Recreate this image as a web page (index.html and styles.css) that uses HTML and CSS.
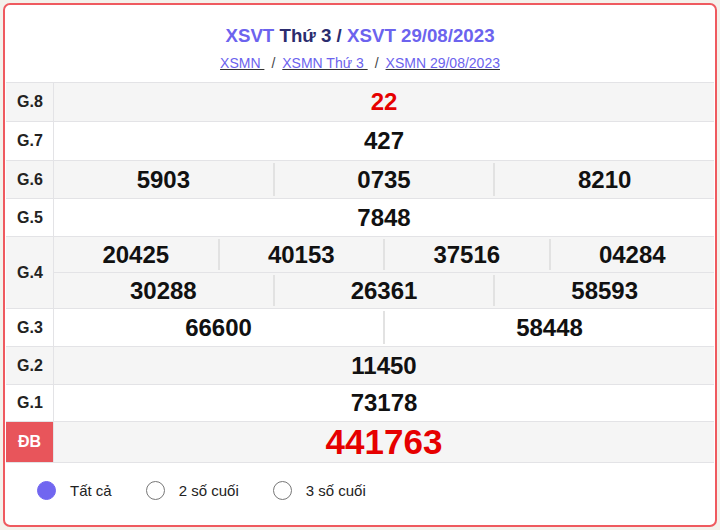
FILE: index.html
```html
<!DOCTYPE html>
<html lang="vi">
<head>
<meta charset="utf-8">
<title>XSVT 29/08/2023</title>
<link rel="stylesheet" href="styles.css">
</head>
<body>
<div class="card">
  <div class="head">
    <h1 class="title"><a href="#">XSVT</a> Thứ 3 / <a href="#">XSVT 29/08/2023</a></h1>
    <div class="crumbs"><a href="#">XSMN </a><span class="sep">/</span><a href="#">XSMN Thứ 3 </a><span class="sep">/</span><a href="#">XSMN 29/08/2023</a></div>
  </div>
  <div class="table">
    <div class="row odd">
      <div class="label">G.8</div>
      <div class="vals"><div class="line h38"><div class="num red">22</div></div></div>
    </div>
    <div class="row">
      <div class="label">G.7</div>
      <div class="vals"><div class="line h38"><div class="num">427</div></div></div>
    </div>
    <div class="row odd">
      <div class="label">G.6</div>
      <div class="vals"><div class="line h37"><div class="num">5903</div><div class="num">0735</div><div class="num">8210</div></div></div>
    </div>
    <div class="row">
      <div class="label">G.5</div>
      <div class="vals"><div class="line h37"><div class="num">7848</div></div></div>
    </div>
    <div class="row odd">
      <div class="label">G.4</div>
      <div class="vals">
        <div class="line h35"><div class="num">20425</div><div class="num">40153</div><div class="num">37516</div><div class="num">04284</div></div>
        <div class="line h35 sub"><div class="num">30288</div><div class="num">26361</div><div class="num">58593</div></div>
      </div>
    </div>
    <div class="row">
      <div class="label">G.3</div>
      <div class="vals"><div class="line h37"><div class="num">66600</div><div class="num">58448</div></div></div>
    </div>
    <div class="row odd">
      <div class="label">G.2</div>
      <div class="vals"><div class="line h37"><div class="num">11450</div></div></div>
    </div>
    <div class="row">
      <div class="label">G.1</div>
      <div class="vals"><div class="line h36"><div class="num">73178</div></div></div>
    </div>
    <div class="row odd">
      <div class="label db">ĐB</div>
      <div class="vals"><div class="line h40"><div class="num red big">441763</div></div></div>
    </div>
  </div>
  <div class="radios">
    <label class="radio"><span class="dot on"></span>Tất cả</label>
    <label class="radio"><span class="dot"></span>2 số cuối</label>
    <label class="radio"><span class="dot"></span>3 số cuối</label>
  </div>
</div>
</body>
</html>
```
FILE: styles.css
```css
html, body { margin: 0; padding: 0; }
body {
  background: #f4f1eb;
  font-family: "Liberation Sans", Arial, sans-serif;
  color: #111;
}
.card {
  margin: 3px;
  height: 524px;
  box-sizing: border-box;
  border: 2px solid #ef5a5f;
  border-radius: 7px;
  background: #fff;
  overflow: hidden;
}
.head {
  padding-top: 20px;
  height: 77px;
  box-sizing: border-box;
  text-align: center;
}
.title {
  margin: 0;
  font-size: 18.7px;
  line-height: 22px;
  font-weight: bold;
  color: #2b2c6e;
}
.title a { color: #6c63ee; text-decoration: none; }
.crumbs {
  margin-top: 8px;
  font-size: 14px;
  line-height: 17px;
  color: #444;
}
.crumbs a {
  color: #6c63ee;
  text-decoration: underline;
  text-decoration-color: #333;
}
.sep { margin: 0 7px; }
.table {
  margin: 0 1px;
  border-bottom: 1px solid #e3e3e6;
}
.row {
  display: flex;
  border-top: 1px solid #e3e3e6;
  background: #fff;
}
.row.odd { background: #f5f5f5; }
.label {
  width: 48px;
  flex: none;
  box-sizing: border-box;
  padding-left: 11px;
  border-right: 1px solid #e3e3e6;
  display: flex;
  align-items: center;
  font-size: 16px;
  font-weight: bold;
  color: #222;
  background: #f5f5f5;
}
.row:not(.odd) .label { background: #fff; }
.label.db {
  background: #e8555b;
  color: #fff;
  padding-left: 12px;
}
.vals {
  flex: 1;
  display: flex;
  flex-direction: column;
}
.line { display: flex; }
.h35 { height: 35px; }
.h36 { height: 36px; }
.h37 { height: 37px; }
.h38 { height: 38px; }
.h40 { height: 40px; }
.line.sub { border-top: 1px solid #e3e3e6; }
.num {
  flex: 1;
  display: flex;
  align-items: center;
  justify-content: center;
  font-size: 24px;
  font-weight: bold;
  color: #111;
}
.num + .num {
  border-left: 2px solid #e2e2e2;
  margin: 2px 0;
}
.red { color: #e60000; }
.big { font-size: 35px; }
.radios {
  display: flex;
  align-items: center;
  padding: 18px 0 0 32px;
  font-size: 15px;
  color: #222;
}
.radio {
  display: flex;
  align-items: center;
  margin-right: 34px;
}
.dot {
  width: 19px;
  height: 19px;
  border: 1px solid #777;
  border-radius: 50%;
  box-sizing: border-box;
  margin-right: 14px;
  background: #fff;
}
.dot.on {
  background: #7166f0;
  border-color: #7166f0;
}
```
